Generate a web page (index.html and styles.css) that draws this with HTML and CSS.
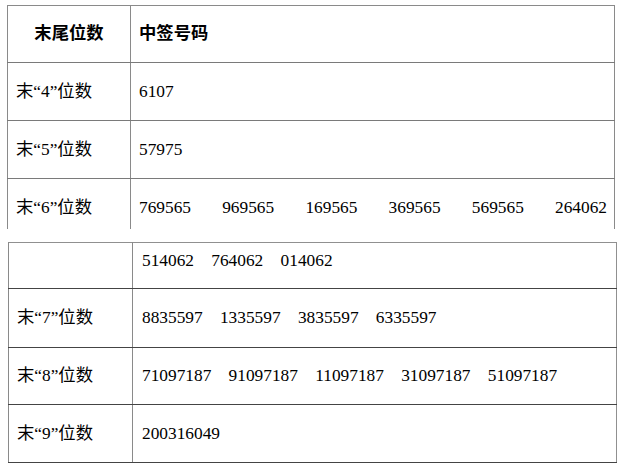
FILE: index.html
```html
<!DOCTYPE html>
<html lang="en">
<head>
<meta charset="utf-8">
<title>中签号码</title>
<link rel="stylesheet" href="styles.css">
</head>
<body>
<div class="page">
  <table class="t t1">
    <colgroup><col class="c1a"><col></colgroup>
    <tr class="hdr">
      <th class="lab center">末尾位数</th>
      <th class="num">中签号码</th>
    </tr>
    <tr class="r58">
      <td class="lab">末“4”位数</td>
      <td class="num">6107</td>
    </tr>
    <tr class="r58">
      <td class="lab">末“5”位数</td>
      <td class="num">57975</td>
    </tr>
    <tr class="cut">
      <td class="lab">末“6”位数</td>
      <td class="num"><div class="just"><span>769565</span><span>969565</span><span>169565</span><span>369565</span><span>569565</span><span>264062</span></div></td>
    </tr>
  </table>

  <table class="t t2">
    <colgroup><col class="c1b"><col></colgroup>
    <tr class="cont">
      <td class="lab"></td>
      <td class="num"><div class="list"><span>514062</span><span>764062</span><span>014062</span></div></td>
    </tr>
    <tr class="r59">
      <td class="lab">末“7”位数</td>
      <td class="num"><div class="list"><span>8835597</span><span>1335597</span><span>3835597</span><span>6335597</span></div></td>
    </tr>
    <tr class="r57">
      <td class="lab">末“8”位数</td>
      <td class="num"><div class="list"><span>71097187</span><span>91097187</span><span>11097187</span><span>31097187</span><span>51097187</span></div></td>
    </tr>
    <tr class="r58 last">
      <td class="lab">末“9”位数</td>
      <td class="num">200316049</td>
    </tr>
  </table>
</div>
</body>
</html>
```

FILE: styles.css
```css
html, body {
  margin: 0;
  padding: 0;
  background: #ffffff;
}

body {
  font-family: "Liberation Serif", "Times New Roman", "Noto Sans CJK SC", serif;
  font-size: 17.33px;
  color: #000000;
}

.page {
  padding: 5px 0 0 7px;
}

.t {
  border-collapse: collapse;
  table-layout: fixed;
}

.t td, .t th {
  padding: 0;
  line-height: 20px;
  font-weight: normal;
  text-align: left;
  vertical-align: middle;
}

/* ---------- first table ---------- */
.t1 {
  width: 608px;
  border-top: 1px solid #8a8a8a;
  border-left: 1px solid #8a8a8a;
  border-right: 1px solid #8a8a8a;
}

.c1a { width: 123px; }

.t1 td, .t1 th {
  border-left: 1px solid #8a8a8a;
  border-right: 1px solid #8a8a8a;
}

.t1 tr.hdr th,
.t1 tr.r58 td {
  border-bottom: 1px solid #7a7a7a;
}

.t1 .hdr th {
  height: 56px;
  font-weight: bold;
}

.t1 .r58 td {
  height: 57px;
}

.t1 .lab { padding-left: 8px; }
.t1 .num { padding-left: 8px; padding-right: 7px; }

.t1 .lab.center {
  padding-left: 0;
  text-align: center;
}

.t1 .cut td {
  height: 31px;
  vertical-align: top;
  padding-top: 19px;
}

.just {
  display: flex;
  justify-content: space-between;
}

/* ---------- second table ---------- */
.t2 {
  margin-top: 13px;
  margin-left: 1px;
  width: 609px;
  border-top: 1px solid #909090;
  border-right: 1px solid #909090;
  border-left: 1px solid #555555;
  border-bottom: 1px solid #444444;
}

.c1b { width: 124px; }

.t2 td {
  border-left: 1px solid #8a8a8a;
  border-bottom: 1px solid #444444;
}

.t2 .lab { padding-left: 8px; }
.t2 .num { padding-left: 9px; }

.t2 .cont td {
  height: 37px;
  vertical-align: top;
  padding-top: 8px;
}

.t2 .r59 td { height: 58px; }
.t2 .r57 td { height: 56px; }
.t2 .r58 td { height: 57px; }

.list {
  display: flex;
  gap: 17.3px;
}
```
